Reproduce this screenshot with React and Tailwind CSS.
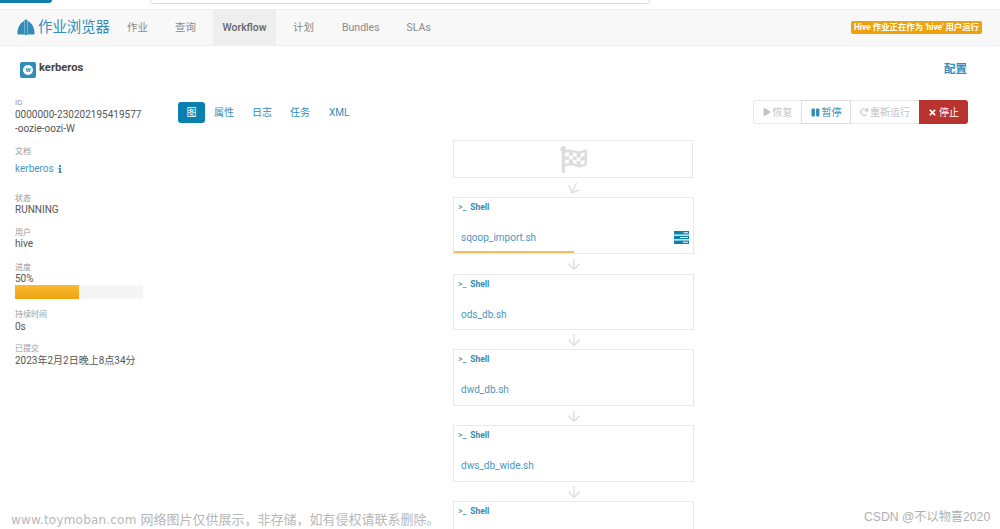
import { ArrowDown } from 'lucide-react';
import { FaPlay, FaPause, FaRedo, FaTimes, FaInfo, FaFlagCheckered } from 'react-icons/fa';

const font = 'font-["Roboto","Noto_Sans_CJK_SC",sans-serif]';

function HueLogo() {
  return (
    <svg width="18" height="17" viewBox="0 0 18 17">
      <path d="M0.5 15.5 C0 9 3 4 7 2 L7.6 15.5 Z M11 2 C15 4 18 9 17.5 15.5 L10.4 15.5 Z" fill="#338bb8" />
      <path d="M7.6 15.8 L7.4 1.5 C8 0.3 10 0.3 10.6 1.5 L10.4 15.8 C9.5 16.4 8.5 16.4 7.6 15.8 Z" fill="#338bb8" />
    </svg>
  );
}

function NavItem({ label, active }) {
  return (
    <div
      className={
        active
          ? 'flex h-full w-[63px] items-center justify-center whitespace-nowrap bg-[#eeeeee] text-[10.5px] font-medium text-[#666]'
          : 'flex h-full items-center justify-center whitespace-nowrap text-[10.5px] text-[#8a8a8a]'
      }
    >
      {label}
    </div>
  );
}

function Field({ label, children, className = '' }) {
  return (
    <div className={className}>
      <div className="text-[8px] leading-[11px] text-[#999]">{label}</div>
      {children}
    </div>
  );
}

function TasksIcon() {
  return (
    <svg className="absolute right-[4px] top-[33px]" width="15" height="13" viewBox="0 0 15 13">
      <path d="M0 0H15V3.4H0Z M0 4.8H15V8.2H0Z M0 9.6H15V13H0Z" fill="#0b7fad" />
      <path d="M9.5 1.2H14V2.2H9.5Z M6 6H14V7H6Z M9 10.8H14V11.8H9Z" fill="#ffffff" />
    </svg>
  );
}

function ShellNode({ name, height, running }) {
  return (
    <div className={`relative w-[241px] border border-[#e8e8e8] bg-white ${height}`}>
      <div className="flex items-center gap-[4px] pl-[4px] pt-[3px] text-[8.5px] font-bold leading-[12px] text-[#338bb8]">
        <span className="font-normal">&gt;_</span>
        <span>Shell</span>
      </div>
      {name && <div className="pl-[7px] pt-[18px] text-[10px] leading-[14px] text-[#4a97c0]">{name}</div>}
      {running && (
        <>
          <TasksIcon />
          <div className="absolute bottom-0 left-0 h-[2px] w-[120px] bg-[#f0c060]" />
        </>
      )}
    </div>
  );
}

function Arrow({ className = '' }) {
  return (
    <div className={`flex w-[241px] justify-center text-[#dddddd] ${className}`}>
      <ArrowDown size={18} strokeWidth={1.8} />
    </div>
  );
}

export default function App() {
  return (
    <div className={`relative h-[529px] w-[1000px] overflow-hidden bg-white ${font}`}>
      {/* browser strip on top */}
      <div className="flex h-[9px] items-start">
        <div className="h-[3px] w-[52px] rounded-br bg-[#0b7fad]" />
        <div className="ml-[98px] h-[4px] w-[500px] rounded-b border border-t-0 border-[#dddddd]" />
      </div>

      {/* nav */}
      <div className="flex h-[37px] items-center border-y border-[#eeeeee] bg-[#f8f8f8] pl-[17px] pr-[18px]">
        <HueLogo />
        <div className="ml-[3px] w-[72px] whitespace-nowrap text-[14.4px] text-[#338bb8]">作业浏览器</div>
        <div className="ml-[17px] flex h-full items-center">
          <NavItem label="作业" />
          <div className="ml-[27px] h-full"><NavItem label="查询" /></div>
          <div className="ml-[17px] h-full"><NavItem label="Workflow" active /></div>
          <div className="ml-[17px] h-full"><NavItem label="计划" /></div>
          <div className="ml-[28px] h-full"><NavItem label="Bundles" /></div>
          <div className="ml-[27px] h-full"><NavItem label="SLAs" /></div>
        </div>
        <div className="ml-auto rounded-[2px] bg-[#eda20d] px-[3px] py-[1px] text-[8.4px] font-bold leading-[11px] text-white">
          Hive 作业正在作为 'hive' 用户运行
        </div>
      </div>

      {/* title */}
      <div className="flex h-[40px] items-start justify-between pl-[20px] pr-[33px] pt-[14px]">
        <div className="flex items-start gap-[3px]">
          <div className="mt-[2px] flex h-[16px] w-[16px] items-center justify-center rounded-[2px] bg-[#338bb8]">
            <div className="flex h-[10px] w-[10px] items-center justify-center rounded-full bg-white text-[6px] font-bold leading-none text-[#338bb8]">
              W
            </div>
          </div>
          <div className="mt-[1px] text-[11.2px] font-bold leading-[14px] text-[#444]">kerberos</div>
        </div>
        <div className="pt-[1px] text-[11.5px] font-bold leading-[16px] text-[#338bb8]">配置</div>
      </div>

      {/* body */}
      <div className="flex">
        <div className="w-[163px] pl-[15px] pt-[11px] text-[10px] leading-[14px] text-[#555]">
          <Field label="ID">
            <div className="w-[128px] whitespace-nowrap leading-[14px]">0000000-230202195419577</div>
            <div>-oozie-oozi-W</div>
          </Field>
          <Field label="文档" className="mt-[10px]">
            <div className="mt-[5px] flex items-center gap-[2px] text-[#4a97c0]">
              kerberos
              <FaInfo size={8} className="text-[#338bb8]" />
            </div>
          </Field>
          <Field label="状态" className="mt-[17px]"><div className="leading-[12px]">RUNNING</div></Field>
          <Field label="用户" className="mt-[11px]"><div className="leading-[12px]">hive</div></Field>
          <Field label="进度" className="mt-[12px]">
            <div className="leading-[12px]">50%</div>
            <div className="h-[14px] w-[128px] bg-[#f5f5f5]">
              <div className="h-full w-1/2 bg-gradient-to-b from-[#fbb92f] to-[#eea30e]" />
            </div>
          </Field>
          <Field label="持续时间" className="mt-[10px]"><div className="leading-[13px]">0s</div></Field>
          <Field label="已提交" className="mt-[10px]"><div className="leading-[14px]">2023年2月2日晚上8点34分</div></Field>
        </div>

        <div className="flex-1">
          <div className="flex items-start justify-between pr-[32px] pt-[14px]">
            <div className="mt-[2px] flex items-center gap-[9px] pl-[15px] text-[10px] text-[#338bb8]">
              <div className="flex h-[21px] w-[27px] items-center justify-center rounded-[3px] bg-[#0b7fad] text-white">图</div>
              <div>属性</div>
              <div className="ml-[9px]">日志</div>
              <div className="ml-[9px]">任务</div>
              <div className="ml-[10px]">XML</div>
            </div>
            <div className="flex h-[24px] items-stretch text-[10px]">
              <div className="flex w-[48px] items-center justify-center gap-[2px] rounded-l-[3px] border border-r-0 border-[#e8e8e8] text-[#c4c4c4]">
                <FaPlay size={8} />恢复
              </div>
              <div className="flex w-[50px] items-center justify-center gap-[2px] border border-[#dddddd] text-[#338bb8]">
                <FaPause size={9} />暂停
              </div>
              <div className="flex w-[68px] items-center justify-center gap-[2px] border-y border-[#e8e8e8] text-[#c4c4c4]">
                <FaRedo size={8} />重新运行
              </div>
              <div className="flex w-[49px] items-center justify-center gap-[2px] rounded-r-[3px] bg-[#b9342e] text-white">
                <FaTimes size={9} />停止
              </div>
            </div>
          </div>

          {/* workflow graph */}
          <div className="ml-[290px] mt-[16px] flex flex-col">
            <div className="flex h-[38px] w-[240px] items-center justify-center border border-[#e8e8e8] text-[#dddddd]">
              <FaFlagCheckered size={27} />
            </div>
            <div className="flex h-[19px] w-[241px] items-center justify-center text-[#dddddd]">
              <ArrowDown size={18} strokeWidth={1.8} className="rotate-[25deg]" />
            </div>
            <ShellNode name="sqoop_import.sh" height="h-[57px]" running />
            <Arrow className="h-[20px] items-center" />
            <ShellNode name="ods_db.sh" height="h-[56px]" />
            <Arrow className="h-[19px] items-center" />
            <ShellNode name="dwd_db.sh" height="h-[57px]" />
            <Arrow className="h-[19px] items-center" />
            <ShellNode name="dws_db_wide.sh" height="h-[57px]" />
            <Arrow className="h-[19px] items-center" />
            <ShellNode height="h-[57px]" />
          </div>
        </div>
      </div>

      {/* watermarks */}
      <div className='absolute left-[11px] top-[512px] whitespace-nowrap font-["DejaVu_Sans","Noto_Sans_CJK_SC",sans-serif] text-[12px] leading-[16px] text-[#b8b8b8]'>
        <span className="tracking-[0.2px]">www.toymoban.com </span>
        <span className="text-[13px]">网络图片仅供展示，非存储，如有侵权请联系删除。</span>
      </div>
      <div className='absolute left-[864px] top-[509px] whitespace-nowrap font-["Liberation_Sans","Noto_Sans_CJK_SC",sans-serif] text-[12.2px] leading-[16px] text-[#b0b0b0]'>
        CSDN @不以物喜2020
      </div>
    </div>
  );
}
